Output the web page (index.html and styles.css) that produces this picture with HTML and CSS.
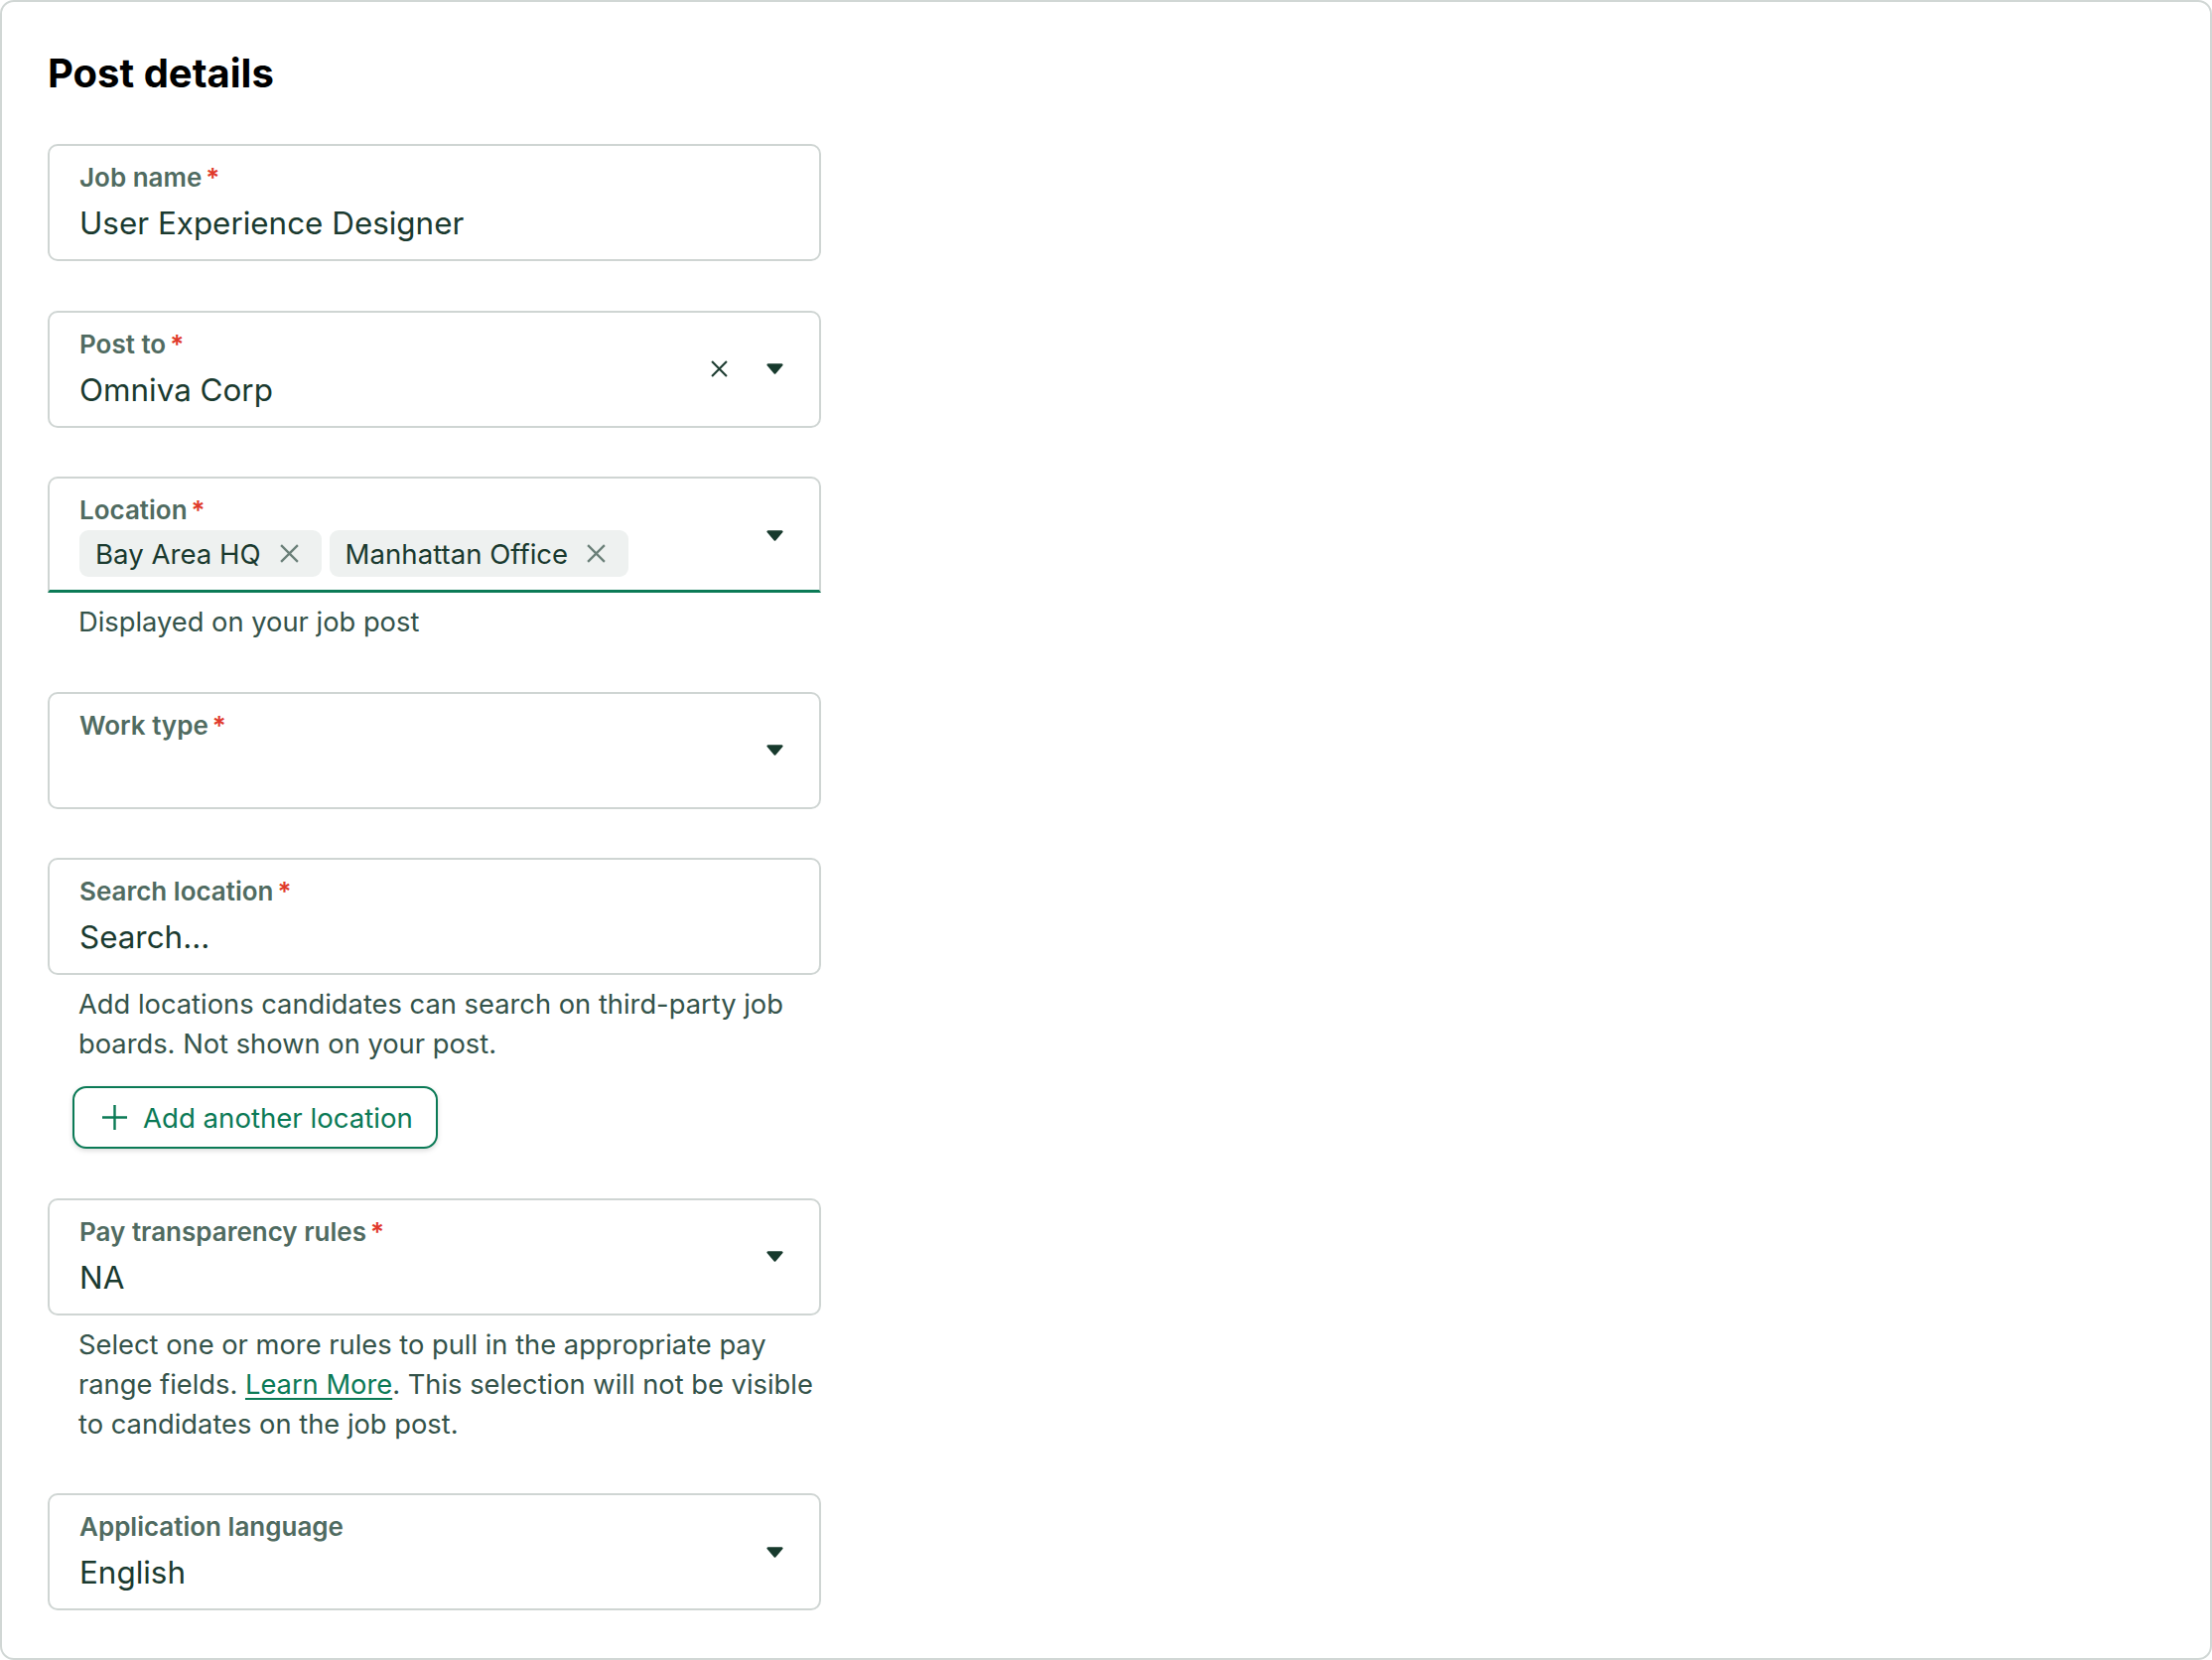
FILE: index.html
```html
<!DOCTYPE html>
<html lang="en">
<head>
  <meta charset="UTF-8">
  <title>Post details</title>
  <meta name="viewport" content="width=device-width, initial-scale=1.0">
  <link rel="stylesheet" href="styles.css">
</head>
<body>

  <div class="card">
    <h1 class="title">Post details</h1>

    <div class="form">

      <!-- Job name -->
      <div class="group">
        <div class="field">
          <div class="field-body">
            <div class="label">Job name<span class="req">*</span></div>
            <div class="value">User Experience Designer</div>
          </div>
        </div>
      </div>

      <!-- Post to -->
      <div class="group">
        <div class="field">
          <div class="field-body">
            <div class="label">Post to<span class="req">*</span></div>
            <div class="value">Omniva Corp</div>
          </div>
          <div class="field-icons">
            <svg class="clear" viewBox="0 0 16 16"><path d="M1 1l14 14M15 1L1 15" stroke="#1e3d32" stroke-width="2" fill="none"/></svg>
            <svg class="caret" viewBox="0 0 16 10"><path d="M1.6 0h12.8a1.2 1.2 0 0 1 .9 2L8.9 9.4a1.2 1.2 0 0 1-1.8 0L.7 2A1.2 1.2 0 0 1 1.6 0z" fill="#173a2d"/></svg>
          </div>
        </div>
      </div>

      <!-- Location -->
      <div class="group">
        <div class="field focused">
          <div class="field-body">
            <div class="label">Location<span class="req">*</span></div>
            <div class="chips">
              <span class="chip">Bay Area HQ
                <svg viewBox="0 0 20 20"><path d="M2 2l16 16M18 2L2 18" stroke="#6b8079" stroke-width="2.2" fill="none"/></svg>
              </span>
              <span class="chip">Manhattan Office
                <svg viewBox="0 0 20 20"><path d="M2 2l16 16M18 2L2 18" stroke="#6b8079" stroke-width="2.2" fill="none"/></svg>
              </span>
            </div>
          </div>
          <div class="field-icons">
            <svg class="caret" viewBox="0 0 16 10"><path d="M1.6 0h12.8a1.2 1.2 0 0 1 .9 2L8.9 9.4a1.2 1.2 0 0 1-1.8 0L.7 2A1.2 1.2 0 0 1 1.6 0z" fill="#173a2d"/></svg>
          </div>
        </div>
        <p class="helper">Displayed on your job post</p>
      </div>

      <!-- Work type -->
      <div class="group">
        <div class="field">
          <div class="field-body">
            <div class="label">Work type<span class="req">*</span></div>
            <div class="value"></div>
          </div>
          <div class="field-icons">
            <svg class="caret" viewBox="0 0 16 10"><path d="M1.6 0h12.8a1.2 1.2 0 0 1 .9 2L8.9 9.4a1.2 1.2 0 0 1-1.8 0L.7 2A1.2 1.2 0 0 1 1.6 0z" fill="#173a2d"/></svg>
          </div>
        </div>
      </div>

      <!-- Search location -->
      <div class="group">
        <div class="field">
          <div class="field-body">
            <div class="label">Search location<span class="req">*</span></div>
            <div class="value">Search...</div>
          </div>
        </div>
        <p class="helper">Add locations candidates can search on third-party job boards. Not shown on your post.</p>
        <button class="add-btn">
          <svg viewBox="0 0 27 27"><path d="M13.5 1v25M1 13.5h25" stroke="#0b7a56" stroke-width="2.4" fill="none"/></svg>
          Add another location
        </button>
      </div>

      <!-- Pay transparency -->
      <div class="group">
        <div class="field">
          <div class="field-body">
            <div class="label">Pay transparency rules<span class="req">*</span></div>
            <div class="value">NA</div>
          </div>
          <div class="field-icons">
            <svg class="caret" viewBox="0 0 16 10"><path d="M1.6 0h12.8a1.2 1.2 0 0 1 .9 2L8.9 9.4a1.2 1.2 0 0 1-1.8 0L.7 2A1.2 1.2 0 0 1 1.6 0z" fill="#173a2d"/></svg>
          </div>
        </div>
        <p class="helper">Select one or more rules to pull in the appropriate pay range fields. <a href="#">Learn More</a>. This selection will not be visible to candidates on the job post.</p>
      </div>

      <!-- Application language -->
      <div class="group">
        <div class="field">
          <div class="field-body">
            <div class="label">Application language</div>
            <div class="value">English</div>
          </div>
          <div class="field-icons">
            <svg class="caret" viewBox="0 0 16 10"><path d="M1.6 0h12.8a1.2 1.2 0 0 1 .9 2L8.9 9.4a1.2 1.2 0 0 1-1.8 0L.7 2A1.2 1.2 0 0 1 1.6 0z" fill="#173a2d"/></svg>
          </div>
        </div>
      </div>

    </div>
  </div>

</body>
</html>
```

FILE: styles.css
```css
* { margin: 0; padding: 0; box-sizing: border-box; }
body {
  font-family: Inter, 'Noto Sans', sans-serif;
  background: #fff;
  color: #1a3a2f;
}

.card {
  height: 100vh;
  border: 2px solid #d1d7d5;
  border-radius: 14px;
  padding: 48px 46px;
}
.title {
  font-size: 40px;
  line-height: 48px;
  font-weight: 700;
  color: #000;
  margin-bottom: 47px;
}

.form { width: 779px; }
.group { margin-bottom: 49.5px; }

.field {
  display: flex;
  align-items: center;
  min-height: 118px;
  border: 2px solid #cfd5d3;
  border-radius: 10px;
  padding: 16px 36px 16px 30px;
}
.field.focused {
  border-bottom: 3px solid #0b7a56;
  border-bottom-left-radius: 0;
  border-bottom-right-radius: 0;
  padding-bottom: 13px;
  min-height: 117px;
}
.field-body { flex: 1; min-width: 0; }

.label {
  font-size: 26px;
  line-height: 32px;
  font-weight: 600;
  color: #506b61;
}
.req { color: #e0392b; margin-left: 4px; }

.value {
  font-size: 31.4px;
  line-height: 40px;
  min-height: 40px;
  margin-top: 10px;
  color: #1a3a2f;
}

.field-icons { display: flex; align-items: center; gap: 39px; }
.clear { width: 17px; height: 17px; }
.caret { width: 17px; height: 11px; }

.chips { display: flex; gap: 8px; margin-top: 4px; }
.chip {
  display: flex;
  align-items: center;
  gap: 18px;
  height: 47px;
  padding: 0 22px 0 16px;
  background: #eef1f0;
  border-radius: 9px;
  font-size: 27.6px;
  color: #1a3a2f;
}
.chip svg { width: 21px; height: 21px; }

.helper {
  font-size: 27.3px;
  line-height: 40px;
  color: #34534a;
  padding-left: 31px;
  margin: 10px -8px 0 0;
}
.helper a {
  color: #0b7a56;
  text-decoration: underline;
  text-underline-offset: 4px;
  text-decoration-thickness: 2px;
}

.add-btn {
  display: flex;
  align-items: center;
  gap: 15px;
  width: max-content;
  height: 63px;
  margin: 22px 0 0 25px;
  padding: 0 23px 0 27px;
  border: 2px solid #0b7a56;
  border-radius: 14px;
  background: #fff;
  color: #0b7a56;
  font-family: inherit;
  font-size: 27.6px;
  box-shadow: 0 2px 5px rgba(0, 0, 0, 0.15);
  cursor: pointer;
}
.add-btn svg { width: 27px; height: 27px; }
```
